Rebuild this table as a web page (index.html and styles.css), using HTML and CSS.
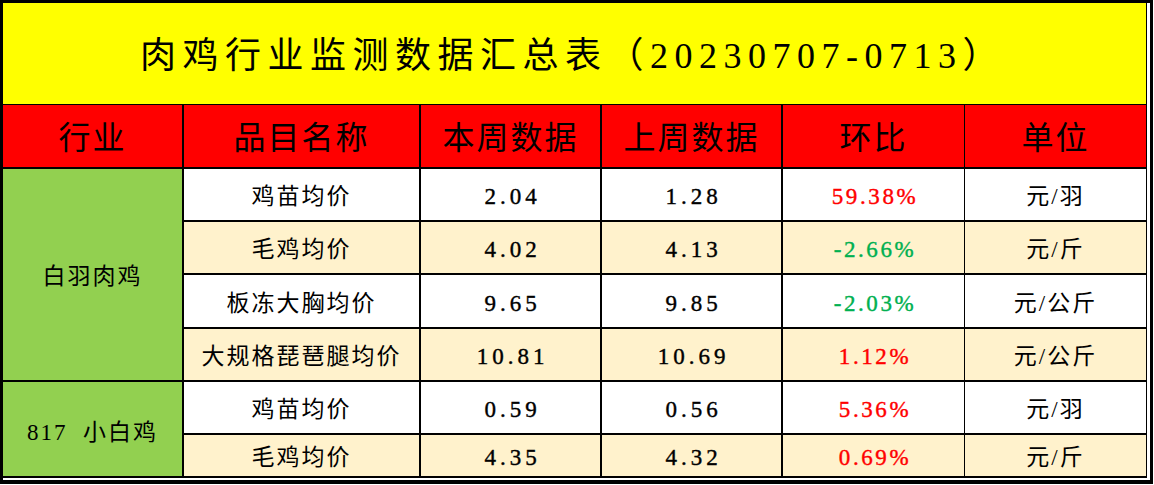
FILE: index.html
```html
<!DOCTYPE html>
<html lang="zh-CN">
<head>
<meta charset="utf-8">
<title>肉鸡行业监测数据汇总表</title>
<link rel="stylesheet" href="styles.css">
</head>
<body>
<div class="frame">
  <div class="sheet">
    <div class="cell title">肉鸡行业监测数据汇总表（20230707-0713）</div>

    <div class="cell hd">行业</div>
    <div class="cell hd">品目名称</div>
    <div class="cell hd">本周数据</div>
    <div class="cell hd">上周数据</div>
    <div class="cell hd thin">环比</div>
    <div class="cell hd last">单位</div>

    <div class="cell grp g1">白羽肉鸡</div>
    <div class="cell">鸡苗均价</div>
    <div class="cell num">2.04</div>
    <div class="cell num">1.28</div>
    <div class="cell thin pct up">59.38%</div>
    <div class="cell last">元/羽</div>

    <div class="cell alt">毛鸡均价</div>
    <div class="cell alt num">4.02</div>
    <div class="cell alt num">4.13</div>
    <div class="cell alt thin pct down">-2.66%</div>
    <div class="cell alt last">元/斤</div>

    <div class="cell">板冻大胸均价</div>
    <div class="cell num">9.65</div>
    <div class="cell num">9.85</div>
    <div class="cell thin pct down">-2.03%</div>
    <div class="cell last">元/公斤</div>

    <div class="cell alt">大规格琵琶腿均价</div>
    <div class="cell alt num">10.81</div>
    <div class="cell alt num">10.69</div>
    <div class="cell alt thin pct up">1.12%</div>
    <div class="cell alt last">元/公斤</div>

    <div class="cell grp g2">817  小白鸡</div>
    <div class="cell">鸡苗均价</div>
    <div class="cell num">0.59</div>
    <div class="cell num">0.56</div>
    <div class="cell thin pct up">5.36%</div>
    <div class="cell last">元/羽</div>

    <div class="cell alt">毛鸡均价</div>
    <div class="cell alt num">4.35</div>
    <div class="cell alt num">4.32</div>
    <div class="cell alt thin pct up">0.69%</div>
    <div class="cell alt last">元/斤</div>
  </div>
</div>
</body>
</html>
```

FILE: styles.css
```css
html, body {
  margin: 0;
  padding: 0;
  background: #ffffff;
}

.frame {
  box-sizing: border-box;
  width: 1153px;
  height: 484px;
  border-style: solid;
  border-color: #000000;
  border-width: 3px 3px 4px 3px;
  padding: 0 3px 2px 0;
  background: #ffffff;
}

.sheet {
  display: grid;
  grid-template-columns: 181px 237px 181px 181px 182px 182px;
  grid-template-rows: 102px 64px 53px 53px 54px 53px 53px 43px;
  font-family: "Liberation Serif", "Noto Sans CJK SC", serif;
  color: #000000;
}

.cell {
  box-sizing: border-box;
  display: flex;
  align-items: center;
  justify-content: center;
  padding-top: 4px;
  border-right: 2px solid #000000;
  border-bottom: 2px solid #000000;
  background: #ffffff;
  font-size: 23px;
  letter-spacing: 2px;
  white-space: pre;
  line-height: 1;
}

.cell.num {
  letter-spacing: 4px;
  padding-left: 4px;
  -webkit-text-stroke: 0.4px currentColor;
}

.cell.pct {
  letter-spacing: 2.6px;
  padding-left: 3px;
  -webkit-text-stroke: 0.4px currentColor;
}

.cell.thin {
  border-right-width: 1px;
}

.cell.last {
  border-right-width: 1px;
}

.cell.alt {
  background: #fff2cc;
}

.title {
  grid-column: 1 / -1;
  background: #ffff00;
  font-size: 36px;
  letter-spacing: 6.5px;
  border-bottom-width: 1px;
  border-right-width: 1px;
  padding-right: 4px;
}

.hd {
  background: #ff0000;
  font-size: 32px;
  letter-spacing: 2px;
}

.grp {
  background: #92d050;
}

.g1 {
  grid-row: span 4;
}

.g2 {
  grid-row: span 2;
  padding-top: 6px;
}

.up {
  color: #ff0000;
}

.down {
  color: #00b050;
}
```
